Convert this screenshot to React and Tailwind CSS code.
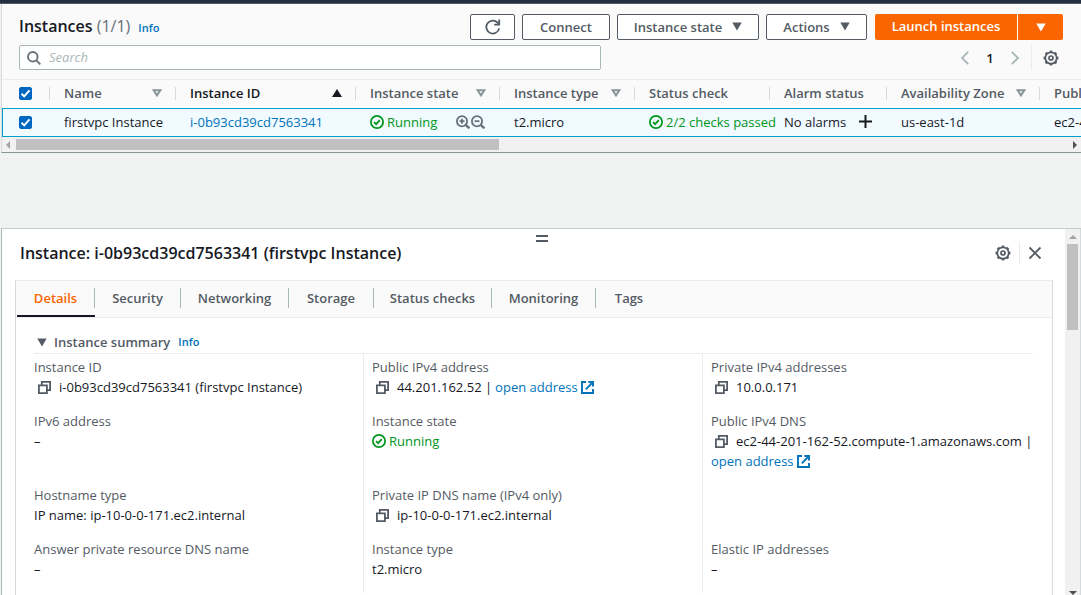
import React from "react";

const font = "font-['Open_Sans','Noto_Sans',sans-serif]";

function CaretDown({ className = "" }) {
  return (
    <svg viewBox="0 0 10 9" className={"h-[9px] w-[10px] shrink-0 " + className} aria-hidden="true">
      <path d="M0.3 0.5h9.4L5 8.6z" fill="currentColor" />
    </svg>
  );
}

function SortIcon({ kind }) {
  if (kind === "asc")
    return (
      <svg viewBox="0 0 10 8" className="h-2 w-[10px] shrink-0 text-[#16191f]" aria-hidden="true">
        <path d="M5 0l5 8H0z" fill="currentColor" />
      </svg>
    );
  return (
    <svg viewBox="0 0 10 8" className="h-2 w-[10px] shrink-0 text-[#879596]" aria-hidden="true">
      <path d="M1.6 1.2h6.8L5 6.4z" fill="none" stroke="currentColor" strokeWidth="2" />
    </svg>
  );
}

function Check() {
  return (
    <svg viewBox="0 0 16 16" className="h-[14px] w-[14px] shrink-0" fill="none" stroke="currentColor" strokeWidth="2" aria-hidden="true">
      <circle cx="8" cy="8" r="7" />
      <path d="M4.6 8.2l2.4 2.3 4.2-4.6" />
    </svg>
  );
}

function Magnifier({ plus }) {
  return (
    <svg viewBox="0 0 14 14" className="h-[14px] w-[14px] shrink-0" fill="none" stroke="currentColor" strokeWidth="1.8" aria-hidden="true">
      <circle cx="6" cy="6.2" r="5.1" />
      <path d="M9.6 9.8l3.8 3.5" strokeWidth="2.3" />
      <path d={plus ? "M3.5 6.2h5M6 3.7v5" : "M3.5 6.2h5"} />
    </svg>
  );
}

function Gear() {
  return (
    <svg viewBox="0 0 16 16" className="h-4 w-4 shrink-0" fill="none" stroke="currentColor" aria-hidden="true">
      <circle cx="8" cy="8" r="5.7" strokeWidth="1.7" />
      <circle cx="8" cy="8" r="6.7" strokeWidth="1.5" pathLength="80" strokeDasharray="5 5" strokeDashoffset="2.5" />
      <circle cx="8" cy="8" r="2" strokeWidth="1.7" />
    </svg>
  );
}

function Copy() {
  return (
    <svg viewBox="0 0 13 13" className="h-[13px] w-[13px] shrink-0 text-[#545b64]" fill="none" stroke="currentColor" strokeWidth="1.8" aria-hidden="true">
      <path d="M0.9 4.4h8v7.7h-8z" />
      <path d="M3.8 4.4V0.9h8.3v8.2H8.9" />
    </svg>
  );
}

function External() {
  return (
    <svg viewBox="0 0 13 13" className="h-[13px] w-[13px] shrink-0" fill="none" stroke="currentColor" strokeWidth="1.9" aria-hidden="true">
      <path d="M5 1H1v11h11V8" />
      <path d="M7.4 1H12v4.6M12 1L4.8 8.3" />
    </svg>
  );
}

function Chevron({ right }) {
  return (
    <svg viewBox="0 0 8 14" className="h-[14px] w-2" fill="none" stroke="currentColor" strokeWidth="1.9" aria-hidden="true">
      <path d={right ? "M0.8 0.8L7 7l-6.2 6.2" : "M7.2 0.8L1 7l6.2 6.2"} />
    </svg>
  );
}

function Button({ children, className = "" }) {
  return (
    <button
      type="button"
      className={
        "flex h-[26px] shrink-0 items-center justify-center gap-[10px] rounded-[2px] border border-[#545b64] bg-white pb-px font-semibold text-[#545b64] " +
        className
      }
    >
      {children}
    </button>
  );
}

function Box({ label, className }) {
  return (
    <span className={"relative flex h-[13px] w-[13px] " + className}>
      <input
        type="checkbox"
        defaultChecked
        aria-label={label}
        className="peer h-[13px] w-[13px] appearance-none rounded-[2px] border border-[#879596] bg-white checked:border-[#0067c0] checked:bg-[#0067c0]"
      />
      <svg viewBox="0 0 13 13" className="pointer-events-none absolute inset-0 hidden h-[13px] w-[13px] peer-checked:block" fill="none" stroke="white" strokeWidth="2" aria-hidden="true">
        <path d="M2.5 6.8l2.7 2.6 5.3-6" />
      </svg>
    </span>
  );
}

const columns = [
  ["Name", "none", "w-[126px]"],
  ["Instance ID", "asc", "w-[180px]"],
  ["Instance state", "none", "w-[144px]"],
  ["Instance type", "none", "w-[135px]"],
  ["Status check", null, "w-[135px]"],
  ["Alarm status", null, "w-[117px]"],
  ["Availability Zone", "none", "w-[153px]"],
  ["Public IPv4 DNS", "none", "w-[180px]"],
];

const tabs = [
  ["Details", "w-[78px]"],
  ["Security", "w-[86px]"],
  ["Networking", "w-[108px]"],
  ["Storage", "w-[85px]"],
  ["Status checks", "w-[118px]"],
  ["Monitoring", "w-[104px]"],
  ["Tags", "w-[66px]"],
];

function OpenAddress() {
  return (
    <a href="#open" className="flex items-center gap-[3px] text-[#0073bb]">
      open address
      <External />
    </a>
  );
}

function Copied({ children }) {
  return (
    <span className="flex items-center gap-2 pl-1 whitespace-nowrap">
      <button type="button" aria-label="Copy">
        <Copy />
      </button>
      <span>{children}</span>
    </span>
  );
}

const facts = [
  ["Instance ID", <Copied>i-0b93cd39cd7563341 (firstvpc Instance)</Copied>],
  [
    "Public IPv4 address",
    <>
      <Copied>44.201.162.52 |</Copied>
      <OpenAddress />
    </>,
  ],
  ["Private IPv4 addresses", <Copied>10.0.0.171</Copied>],
  ["IPv6 address", "–"],
  [
    "Instance state",
    <span className="flex items-center gap-[3px] text-[#00961b]">
      <Check />
      Running
    </span>,
  ],
  [
    "Public IPv4 DNS",
    <>
      <Copied>ec2-44-201-162-52.compute-1.amazonaws.com |</Copied>
      <OpenAddress />
    </>,
  ],
  ["Hostname type", "IP name: ip-10-0-0-171.ec2.internal"],
  ["Private IP DNS name (IPv4 only)", <Copied>ip-10-0-0-171.ec2.internal</Copied>],
  null,
  ["Answer private resource DNS name", "–"],
  ["Instance type", "t2.micro"],
  ["Elastic IP addresses", "–"],
];

function InstancesTable() {
  return (
    <div className="overflow-hidden">
      <table className="w-full min-w-[1218px] table-fixed border-separate border-spacing-0">
        <thead>
          <tr className="h-[29px] [&>th]:border-t [&>th]:border-[#eaeded] [&>th]:p-0 [&>th]:pb-0.5">
            <th className="w-12">
              <div className="flex h-[13px] items-center border-r border-[#d5dbdb]">
                <Box label="Select all instances" className="ml-[17px]" />
              </div>
            </th>
            {columns.map(([name, sort, width]) => (
              <th key={name} className={"text-left font-semibold " + width}>
                <div className="flex h-[13px] items-center justify-between border-r border-[#d5dbdb] pr-[13px] pl-[14px] whitespace-nowrap">
                  <span className={sort === "asc" ? "text-[#16191f]" : "text-[#545b64]"}>{name}</span>
                  {sort && <SortIcon kind={sort} />}
                </div>
              </th>
            ))}
          </tr>
        </thead>
        <tbody>
          <tr className="h-[29px] bg-[#f1faff] whitespace-nowrap [&>td]:border-y [&>td]:border-[#00a1c9] [&>td]:p-0 [&>td+td]:pb-0.5 [&>td+td]:pl-[14px]">
            <td className="border-l">
              <Box label="Select firstvpc Instance" className="ml-4" />
            </td>
            <td>firstvpc Instance</td>
            <td>
              <a href="#instance" className="text-[#0073bb]">
                i-0b93cd39cd7563341
              </a>
            </td>
            <td>
              <div className="flex items-center justify-between pr-[15px]">
                <span className="flex items-center gap-[3px] text-[#00961b]">
                  <Check />
                  Running
                </span>
                <span className="flex gap-px text-[#687078]">
                  <button type="button" aria-label="Filter by this value">
                    <Magnifier plus />
                  </button>
                  <button type="button" aria-label="Exclude this value">
                    <Magnifier />
                  </button>
                </span>
              </div>
            </td>
            <td>t2.micro</td>
            <td>
              <span className="flex items-center gap-[3px] text-[#00961b]">
                <Check />
                2/2 checks passed
              </span>
            </td>
            <td>
              <div className="flex items-center justify-between pr-[15px]">
                No alarms
                <button type="button" aria-label="Add alarm">
                  <svg viewBox="0 0 13 13" className="h-[13px] w-[13px]" stroke="#16191f" strokeWidth="2" aria-hidden="true">
                    <path d="M0 6.5h13M6.5 0v13" />
                  </svg>
                </button>
              </div>
            </td>
            <td>us-east-1d</td>
            <td>ec2-44-201-162-52.co…</td>
          </tr>
        </tbody>
      </table>
    </div>
  );
}

export default function App() {
  return (
    <div className={"flex h-screen flex-col overflow-hidden bg-[#f1f3f3] text-[13px] leading-5 text-[#16191f] " + font}>
      <div className="h-1 shrink-0 border-b border-[#545b64] bg-[#232f3e]" />
      <section className="ml-px shrink-0 border-b border-l border-[#879596] border-l-[#d5dbdb] bg-[#fafafa]">
        <header className="flex items-center justify-between pt-[10px] pr-[18px] pl-[17px]">
          <div className="flex items-baseline pb-0.5">
            <h1 className="text-base font-semibold">
              Instances <span className="font-normal text-[#687078]">(1/1)</span>
            </h1>
            <a href="#info" className="ml-2 text-[11px] font-semibold text-[#0073bb]">
              Info
            </a>
          </div>
          <div className="flex gap-[7px]">
            <Button className="w-[45px]">
              <svg viewBox="0 0 16 16" className="h-4 w-4" fill="none" stroke="currentColor" strokeWidth="1.8" aria-label="Refresh">
                <path d="M14.2 9.4A6.5 6.5 0 1 1 12.6 3.6L14 5" />
                <path d="M14.2 0.6v5H9.2" />
              </svg>
            </Button>
            <Button className="w-[88px]">Connect</Button>
            <Button className="w-[142px]">
              Instance state <CaretDown />
            </Button>
            <Button className="w-[101px]">
              Actions <CaretDown />
            </Button>
            <div className="ml-px flex gap-px">
              <button type="button" className="h-[26px] w-[142px] rounded-l-[2px] bg-[#fb6500] pb-0.5 font-semibold text-white">
                Launch instances
              </button>
              <button type="button" aria-label="More launch options" className="flex h-[26px] w-[45px] items-center justify-center rounded-r-[2px] bg-[#fb6500] text-white">
                <CaretDown />
              </button>
            </div>
          </div>
        </header>
        <div className="flex items-center justify-between pt-[5px] pr-[22px] pb-[9px] pl-[17px]">
          <label className="flex h-[25px] w-[56%] items-center gap-2 rounded-[2px] border border-[#aab7b8] bg-white px-[7px]">
            <svg viewBox="0 0 14 14" className="h-[14px] w-[14px] shrink-0 text-[#687078]" fill="none" stroke="currentColor" strokeWidth="1.9" aria-hidden="true">
              <circle cx="5.8" cy="5.8" r="4.8" />
              <path d="M9.3 9.3l4 4" />
            </svg>
            <input type="search" aria-label="Search instances" placeholder="Search" className="min-w-0 flex-1 bg-transparent pb-0.5 outline-none placeholder:text-[#aab7b8] placeholder:italic" />
          </label>
          <nav aria-label="Pagination" className="flex items-center text-[#aab7b8]">
            <button type="button" aria-label="Previous page">
              <Chevron />
            </button>
            <span className="w-[42px] text-center font-semibold text-[#16191f]">1</span>
            <button type="button" aria-label="Next page">
              <Chevron right />
            </button>
            <span className="mr-[11px] ml-3 h-[25px] w-px bg-[#eaeded]" />
            <button type="button" aria-label="Preferences" className="text-[#545b64]">
              <Gear />
            </button>
          </nav>
        </div>
        <InstancesTable />
        <div className="flex h-[15px] items-center bg-[#f1f1f1] pr-1 pl-1">
          <svg viewBox="0 0 4 8" className="h-2 w-1 text-[#a3a3a3]" aria-hidden="true">
            <path d="M4 0v8L0 4z" fill="currentColor" />
          </svg>
          <div className="mx-[6px] flex-1">
            <div className="h-[11px] w-[46%] bg-[#c1c1c1]" />
          </div>
          <svg viewBox="0 0 4 8" className="h-2 w-1 text-[#505050]" aria-hidden="true">
            <path d="M0 0v8l4-4z" fill="currentColor" />
          </svg>
        </div>
      </section>

      <section className="mt-[75px] ml-px flex min-h-0 flex-1 border-t border-l border-[#aab7b8] border-t-[#c5cbcb] bg-white">
        <div className="flex min-w-0 flex-1 flex-col overflow-hidden pr-3 pl-[13px]">
          <button type="button" aria-label="Resize panel" className="mt-[6px] ml-4 flex h-[7px] w-3 shrink-0 self-center border-y-2 border-[#545b64]" />
          <div className="flex shrink-0 items-center justify-between pr-[11px] pl-[5px]">
            <h2 className="text-base leading-[22px] font-semibold">Instance: i-0b93cd39cd7563341 (firstvpc Instance)</h2>
            <div className="flex items-center gap-2 text-[#545b64]">
              <button type="button" aria-label="Panel preferences">
                <Gear />
              </button>
              <span className="h-[22px] w-px bg-[#eaeded]" />
              <button type="button" aria-label="Close panel">
                <svg viewBox="0 0 14 14" className="h-[14px] w-[14px]" stroke="currentColor" strokeWidth="1.8" aria-hidden="true">
                  <path d="M1.5 1.5l11 11M12.5 1.5l-11 11" />
                </svg>
              </button>
            </div>
          </div>
          <div className="mt-4 flex-1 border border-b-0 border-[#d5dbdb] border-t-[#eaeded]">
            <div role="tablist" className="flex h-[37px] items-center border-b border-[#eaeded] bg-[#fafafa] pl-px">
              {tabs.map(([name, width], i) => (
                <button
                  key={name}
                  type="button"
                  role="tab"
                  aria-selected={i === 0}
                  className={
                    "flex h-full shrink-0 items-center border-b-2 font-semibold " +
                    width +
                    (i === 0 ? " border-[#16191f] text-[#fb6500]" : " border-transparent text-[#545b64]")
                  }
                >
                  <span className={"flex h-5 flex-1 items-center justify-center " + (i < tabs.length - 1 ? "border-r border-[#aab7b8]" : "")}>
                    {name}
                  </span>
                </button>
              ))}
            </div>
            <div className="pt-[14px] pr-[19px] pl-[18px]">
              <div className="flex items-center border-b border-[#eaeded] pb-px pl-[3px]">
                <button type="button" className="flex items-center gap-[7px] font-semibold text-[#545b64]">
                  <CaretDown />
                  Instance summary
                </button>
                <a href="#summary-info" className="ml-2 text-[11px] font-semibold text-[#0073bb]">
                  Info
                </a>
              </div>
              <dl className="grid grid-cols-[329fr_339fr_331fr]">
                {facts.map((fact, i) => (
                  <div
                    key={i}
                    className={"pb-[14px] " + (i < 3 ? "pt-[3px] " : "") + (i % 3 ? "border-l border-[#eaeded] pl-2" : "")}
                  >
                    {fact && (
                      <>
                        <dt className="text-[#545b64]">{fact[0]}</dt>
                        <dd className="flex flex-wrap items-center gap-x-[3px]">{fact[1]}</dd>
                      </>
                    )}
                  </div>
                ))}
              </dl>
            </div>
          </div>
        </div>
        <div className="flex w-4 shrink-0 flex-col items-center border-r border-[#d5dbdb] bg-[#f1f1f1] pt-[6px]">
          <svg viewBox="0 0 8 4" className="h-1 w-2 text-[#a3a3a3]" aria-hidden="true">
            <path d="M0 4h8L4 0z" fill="currentColor" />
          </svg>
          <div className="mt-[5px] h-[86px] w-[11px] bg-[#c1c1c1]" />
          <svg viewBox="0 0 8 4" className="mt-auto h-1 w-2 text-[#505050]" aria-hidden="true">
            <path d="M0 0h8L4 4z" fill="currentColor" />
          </svg>
        </div>
      </section>
    </div>
  );
}
